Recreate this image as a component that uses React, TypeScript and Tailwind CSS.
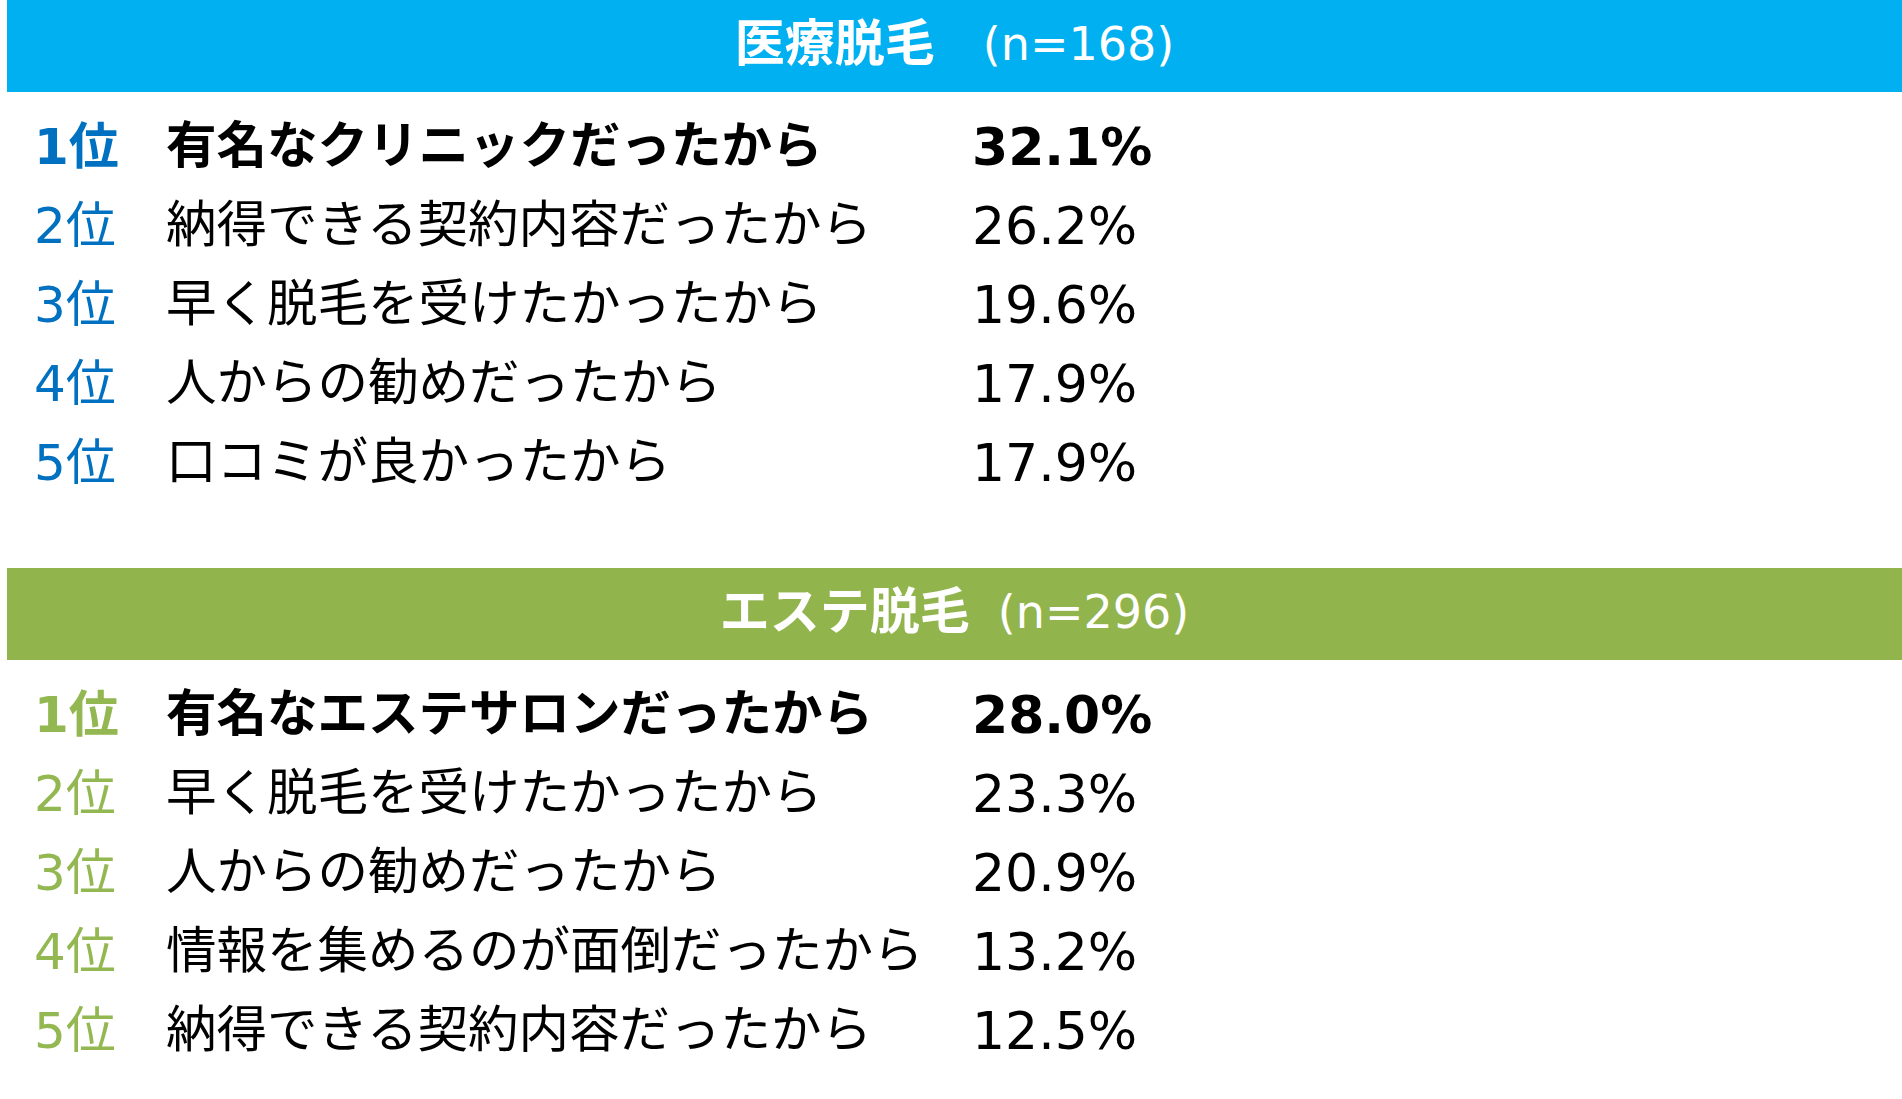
import React from 'react';

type Row = { rank: string; reason: string; pct: string };

interface SectionProps {
  title: string;
  count: string;
  gap: 'wide' | 'narrow';
  barClass: string;
  rankClass: string;
  rows: Row[];
}

const medical: Row[] = [
  { rank: '1位', reason: '有名なクリニックだったから', pct: '32.1%' },
  { rank: '2位', reason: '納得できる契約内容だったから', pct: '26.2%' },
  { rank: '3位', reason: '早く脱毛を受けたかったから', pct: '19.6%' },
  { rank: '4位', reason: '人からの勧めだったから', pct: '17.9%' },
  { rank: '5位', reason: '口コミが良かったから', pct: '17.9%' },
];

const esthe: Row[] = [
  { rank: '1位', reason: '有名なエステサロンだったから', pct: '28.0%' },
  { rank: '2位', reason: '早く脱毛を受けたかったから', pct: '23.3%' },
  { rank: '3位', reason: '人からの勧めだったから', pct: '20.9%' },
  { rank: '4位', reason: '情報を集めるのが面倒だったから', pct: '13.2%' },
  { rank: '5位', reason: '納得できる契約内容だったから', pct: '12.5%' },
];

function Section({ title, count, gap, barClass, rankClass, rows }: SectionProps) {
  return (
    <section>
      <div className={`ml-[7px] h-[92px] flex items-center justify-center text-white pb-[4px] ${barClass}`}>
        <span className="text-[50px] font-bold leading-none">{title}</span>
        <span className={`text-[46px] leading-none ${gap === 'wide' ? 'ml-[48px]' : 'ml-[28px]'}`}>{count}</span>
      </div>
      <div className="pt-[15px]">
        {rows.map((r, i) => {
          const top = i === 0;
          return (
            <div key={r.rank} className={`flex h-[79px] items-center leading-none ${top ? 'font-bold' : 'font-normal'}`}>
              <div className={`w-[166px] pl-[34px] shrink-0 text-[50px] ${rankClass}`}>{r.rank}</div>
              <div className="w-[806px] shrink-0 text-[50.5px] text-black whitespace-nowrap">{r.reason}</div>
              <div className="text-[52px] text-black whitespace-nowrap">{r.pct}</div>
            </div>
          );
        })}
      </div>
    </section>
  );
}

export default function App() {
  return (
    <div
      className="w-[1902px] h-[1099px] bg-white overflow-hidden"
      style={{ fontFamily: '"DejaVu Sans", "Noto Sans CJK JP", sans-serif' }}
    >
      <Section
        title="医療脱毛"
        count="(n=168)"
        gap="wide"
        barClass="bg-[#00b0f0]"
        rankClass="text-[#0070c0]"
        rows={medical}
      />
      <div className="h-[66px]" />
      <Section
        title="エステ脱毛"
        count="(n=296)"
        gap="narrow"
        barClass="bg-[#92b44c]"
        rankClass="text-[#93b852]"
        rows={esthe}
      />
    </div>
  );
}
